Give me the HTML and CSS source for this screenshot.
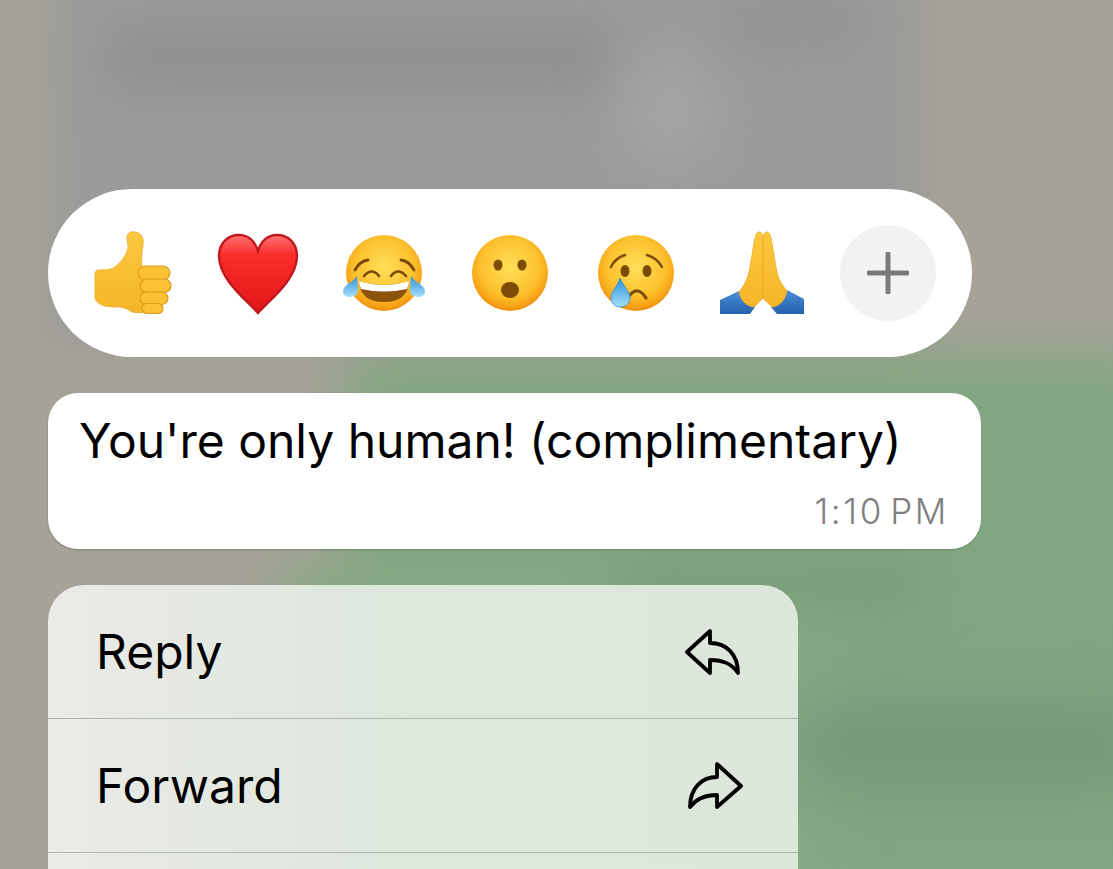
FILE: index.html
```html
<!DOCTYPE html>
<html lang="en">
<head>
    <meta charset="UTF-8">
    <title>Message actions</title>
    <link rel="stylesheet" href="styles.css">
</head>
<body>
    <div class="backdrop">
        <div class="blob blob-gray"></div>
        <div class="blob blob-dark"></div>
        <div class="blob blob-dark-right"></div>
        <div class="blob blob-light"></div>
        <div class="blob blob-green"></div>
        <div class="blob blob-green-low"></div>
        <div class="blob blob-green-mid"></div>
        <div class="blob blob-green-dark"></div>
    </div>

    <div class="screen">
        <div class="reactions">
            <svg class="emoji" viewBox="0 0 96 96">
                <defs>
                    <radialGradient id="face" cx="0.5" cy="0.42" r="0.56">
                        <stop offset="0" stop-color="#ffe05a"/>
                        <stop offset="0.7" stop-color="#fdc02c"/>
                        <stop offset="0.95" stop-color="#f69f15"/>
                        <stop offset="1" stop-color="#ee9212"/>
                    </radialGradient>
                    <linearGradient id="hand" x1="0" y1="0" x2="0" y2="1">
                        <stop offset="0" stop-color="#fcc83e"/>
                        <stop offset="1" stop-color="#f5b52a"/>
                    </linearGradient>
                    <linearGradient id="red" x1="0" y1="0" x2="0" y2="1">
                        <stop offset="0" stop-color="#ff7474"/>
                        <stop offset="0.25" stop-color="#fb2d2d"/>
                        <stop offset="1" stop-color="#e01616"/>
                    </linearGradient>
                    <linearGradient id="drop" x1="0" y1="0" x2="0" y2="1">
                        <stop offset="0" stop-color="#2a8fdc"/>
                        <stop offset="1" stop-color="#a5e0fb"/>
                    </linearGradient>
                    <linearGradient id="sleeve" x1="0" y1="0" x2="0" y2="1">
                        <stop offset="0" stop-color="#4a8edb"/>
                        <stop offset="1" stop-color="#2462ab"/>
                    </linearGradient>
                </defs>
                <path d="M43 13C43 8 47 6 51 7C57 8 60 12 59 19C58 27 57 34 58 41L72 60L62 87C56 88 52 88 48 87C42 83 38 82 34 82C28 82 22 82 18 80C13 78 11 75 11 72V50C11 47 12 45 14 45C20 45 27 45 31 42C38 37 44 27 44 22C44 18 43 16 43 13Z" fill="url(#hand)" stroke="#eeaa22" stroke-width="0.8"/>
                <rect x="54" y="41" width="32" height="14" rx="7" fill="#fac233" stroke="#e09a1c" stroke-width="1.2"/>
                <rect x="56" y="54" width="31" height="13.5" rx="6.7" fill="#fac233" stroke="#e09a1c" stroke-width="1.2"/>
                <rect x="56" y="67" width="28" height="12.5" rx="6.2" fill="#fac233" stroke="#e09a1c" stroke-width="1.2"/>
                <rect x="58" y="78.5" width="21" height="10" rx="5" fill="#fac233" stroke="#e09a1c" stroke-width="1.2"/>
            </svg>
            <svg class="emoji" viewBox="0 0 96 96">
                <path d="M48 88C38 76 9 55 9 31C9 18 18 10 29 10C38 10 45 16 48 26C51 16 58 10 67 10C78 10 87 18 87 31C87 55 58 76 48 88Z" fill="url(#red)" stroke="#c2181c" stroke-width="2.4"/>
            </svg>
            <svg class="emoji" viewBox="0 0 96 96">
                <circle cx="48" cy="48" r="38" fill="url(#face)"/>
                <path d="M19 45Q24 36 32 35M65 35Q73 36 78 45" fill="none" stroke="#7a4b05" stroke-width="2.8" stroke-linecap="round"/>
                <path d="M28 51Q36 42 43 51M55 51Q62 42 70 51" fill="none" stroke="#7a4b05" stroke-width="2.6" stroke-linecap="round"/>
                <path d="M23 56Q48 64 73 56Q72 77 48 77Q24 77 23 56Z" fill="#8c5207"/>
                <path d="M23 56Q48 64 73 56Q73 60 71 64Q48 69 25 64Q23 60 23 56Z" fill="#fff"/>
                <path d="M21 51C18 57 7 60 7 66C7 70 10 72 14 72C19 72 22 69 22 65C22 61 21 56 21 51Z" fill="url(#drop)"/>
                <path d="M75 51C78 57 89 60 89 66C89 70 86 72 82 72C77 72 74 69 74 65C74 61 75 56 75 51Z" fill="url(#drop)"/>
            </svg>
            <svg class="emoji" viewBox="0 0 96 96">
                <circle cx="48" cy="48" r="38" fill="url(#face)"/>
                <ellipse cx="36" cy="40" rx="4.5" ry="5.5" fill="#7d4c06"/>
                <ellipse cx="60" cy="40" rx="4.5" ry="5.5" fill="#7d4c06"/>
                <ellipse cx="48" cy="65" rx="9" ry="8" fill="#7d4c06"/>
            </svg>
            <svg class="emoji" viewBox="0 0 96 96">
                <circle cx="48" cy="48" r="38" fill="url(#face)"/>
                <path d="M23 42Q27 33 37 30M59 30Q69 33 74 42" fill="none" stroke="#7d4c06" stroke-width="2.5" stroke-linecap="round"/>
                <ellipse cx="37" cy="46" rx="4.5" ry="6" fill="#7d4c06"/>
                <ellipse cx="59" cy="46" rx="4.5" ry="6" fill="#7d4c06"/>
                <path d="M41 71Q50 60 58 73" fill="none" stroke="#7d4c06" stroke-width="3.2" stroke-linecap="round"/>
                <path d="M32 53C30 61 23 66 23 73C23 78 27 82 32 82C38 82 42 78 42 73C42 66 35 61 32 53Z" fill="url(#drop)" stroke="#2a8fdc" stroke-width="0.8"/>
            </svg>
            <svg class="emoji" viewBox="0 0 96 96">
                <path d="M6 75L25 66L41 82L36 89H6Z" fill="url(#sleeve)"/>
                <path d="M90 74L73 65L57 82L63 89H90Z" fill="url(#sleeve)"/>
                <path d="M45 7C48 7 49 10 49 15V73C46 76 43 80 39 82C34 81 27 77 25 67C29 62 33 56 35 47C37 38 39 22 41 13C42 9 43 7 45 7Z" fill="url(#hand)" stroke="#eda820" stroke-width="0.8"/>
                <path d="M53 7C50 7 49 10 49 15V73C52 76 55 80 59 82C64 81 71 77 73 66C69 61 65 56 63 47C61 38 59 22 57 13C56 9 55 7 53 7Z" fill="url(#hand)" stroke="#eda820" stroke-width="0.8"/>
            </svg>
            <div class="more">
                <svg class="more-icon" viewBox="0 0 42 42">
                    <path d="M21 2V40M2 21H40" stroke="#7a7a7a" stroke-width="5" stroke-linecap="round"/>
                </svg>
            </div>
        </div>

        <div class="bubble">
            <p class="bubble-text">You're only human! (complimentary)</p>
            <div class="bubble-time">1:10 PM</div>
        </div>

        <div class="menu">
            <div class="menu-item">
                <span>Reply</span>
                <svg class="menu-icon" viewBox="0 0 60 60">
                    <path d="M3 30L26 9V21C42 21 54 32 54 51C48 42 40 38 26 38V51Z" fill="none" stroke="#000" stroke-width="3.8" stroke-linejoin="round"/>
                </svg>
            </div>
            <div class="menu-item">
                <span>Forward</span>
                <svg class="menu-icon" viewBox="0 0 60 60">
                    <path d="M57 30L33 8V21C18 21 6 32 6 51C12 43 20 39 33 39V51Z" fill="none" stroke="#000" stroke-width="3.8" stroke-linejoin="round"/>
                </svg>
            </div>
            <div class="menu-item"></div>
        </div>
    </div>
</body>
</html>
```

FILE: styles.css
```css
html, body {
    margin: 0;
    padding: 0;
    height: 869px;
    overflow: hidden;
}
body {
    font-family: Inter, 'Liberation Sans', sans-serif;
    background-color: #a6a298;
    color: #000;
    position: relative;
}

/* blurred chat behind the overlay */
.backdrop {
    position: absolute;
    inset: 0;
    overflow: hidden;
}
.blob {
    position: absolute;
    filter: blur(25px);
}
.blob-gray {
    left: 50px;
    top: -60px;
    width: 870px;
    height: 400px;
    background-color: #9b9b9a;
    filter: blur(18px);
}
.blob-dark {
    left: 110px;
    top: 30px;
    width: 500px;
    height: 55px;
    background-color: #8e8e8e;
}
.blob-dark-right {
    left: 730px;
    top: 8px;
    width: 130px;
    height: 30px;
    background-color: #8e8e8e;
}
.blob-light {
    left: 630px;
    top: 60px;
    width: 80px;
    height: 100px;
    background-color: #a6a6a6;
    filter: blur(30px);
}
.blob-green {
    left: 345px;
    top: 355px;
    width: 820px;
    height: 550px;
    background-color: #82a780;
}
.blob-green-low {
    left: 280px;
    top: 565px;
    width: 560px;
    height: 340px;
    background-color: #86a982;
}
.blob-green-mid {
    left: 620px;
    top: 565px;
    width: 300px;
    height: 40px;
    background-color: #789a76;
}
.blob-green-dark {
    left: 790px;
    top: 710px;
    width: 360px;
    height: 70px;
    background-color: #72947a;
    filter: blur(35px);
}

.screen {
    position: relative;
    height: 869px;
    box-sizing: border-box;
    overflow: hidden;
    display: flex;
    flex-direction: column;
    align-items: flex-start;
    gap: 36px;
    padding: 189px 0 0 48px;
}

.reactions {
    width: 924px;
    height: 168px;
    box-sizing: border-box;
    padding: 0 36px;
    background-color: white;
    border-radius: 84px;
    display: flex;
    align-items: center;
    gap: 30px;
    flex: none;
}
.emoji {
    width: 96px;
    height: 96px;
    flex: none;
}
.more {
    width: 96px;
    height: 96px;
    flex: none;
    border-radius: 50%;
    background-color: #f2f2f2;
    display: flex;
    align-items: center;
    justify-content: center;
}
.more-icon {
    width: 42px;
    height: 42px;
}

.bubble {
    width: 933px;
    height: 156px;
    box-sizing: border-box;
    padding: 18px 34px 0 31px;
    background-color: white;
    border-radius: 30px;
    box-shadow: 0 1px 2px rgba(0, 0, 0, 0.2);
    flex: none;
}
.bubble-text {
    margin: 0;
    font-size: 48px;
    line-height: 60px;
    white-space: nowrap;
}
.bubble-time {
    margin-top: 20px;
    text-align: right;
    font-size: 35px;
    line-height: 40px;
    letter-spacing: 2.6px;
    word-spacing: -6px;
    margin-right: -2px;
    font-weight: 300;
    color: #808080;
}

.menu {
    width: 750px;
    border-radius: 36px 36px 0 0;
    background: linear-gradient(90deg, #ebeae7, #dde7dc 45%, #dce6da);
    flex: none;
}
.menu-item {
    height: 133px;
    padding: 0 54px 0 48px;
    border-bottom: 1px solid #b0b8ae;
    display: flex;
    align-items: center;
    justify-content: space-between;
    font-size: 48px;
}
.menu-icon {
    width: 60px;
    height: 60px;
}
```
